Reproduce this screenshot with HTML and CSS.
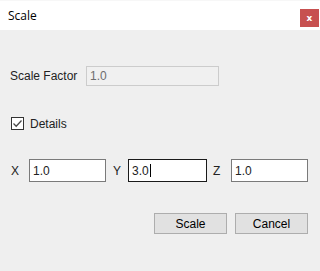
FILE: index.html
```html
<!DOCTYPE html>
<html>
<head>
<meta charset="utf-8">
<link rel="stylesheet" href="styles.css">
</head>
<body>
<div class="dialog">
  <div class="titlebar">
    <span class="title">Scale</span>
    <span class="close">x</span>
  </div>
  <div class="content">
    <div class="row factor-row">
      <span class="label factor-label">Scale Factor</span>
      <div class="field disabled">1.0</div>
    </div>
    <div class="row check-row">
      <span class="checkbox">
        <svg width="11" height="11" viewBox="0 0 11 11"><path d="M1.5 5.5 L4.2 8.2 L9.5 2.5" fill="none" stroke="#4a4a4a" stroke-width="1.3"/></svg>
      </span>
      <span class="label">Details</span>
    </div>
    <div class="row xyz-row">
      <span class="label axis">X</span>
      <div class="field small">1.0</div>
      <span class="label axis ay">Y</span>
      <div class="field small focused">3.0<span class="caret"></span></div>
      <span class="label axis az">Z</span>
      <div class="field small">1.0</div>
    </div>
    <div class="row button-row">
      <div class="btn">Scale</div>
      <div class="btn">Cancel</div>
    </div>
  </div>
</div>
</body>
</html>
```
FILE: styles.css
```css
html, body {
  margin: 0;
  padding: 0;
  background: #efefef;
  width: 320px;
  height: 271px;
  overflow: hidden;
}
.dialog {
  font-family: "Liberation Sans", Arial, sans-serif;
  font-size: 12px;
  color: #222;
}
.titlebar {
  height: 29px;
  background: #ffffff;
  border-top: 1px solid #f7f7f7;
  display: flex;
  align-items: flex-start;
}
.title {
  font-family: "Open Sans", "Noto Sans", sans-serif;
  font-size: 12px;
  color: #000;
  margin-left: 8px;
  margin-top: 6px;
}
.close {
  margin-left: auto;
  margin-top: 8px;
  margin-right: 1px;
  width: 19px;
  height: 18px;
  background: #c75050;
  color: #fff;
  font-family: "DejaVu Sans", sans-serif;
  font-weight: bold;
  font-size: 9px;
  display: flex;
  align-items: center;
  justify-content: center;
  line-height: 1;
}
.content {
  display: flex;
  flex-direction: column;
}
.row {
  display: flex;
  align-items: center;
}
.label {
  line-height: 14px;
}
.factor-row {
  margin-top: 36px;
  padding-left: 10px;
}
.factor-label {
  width: 76px;
}
.field {
  box-sizing: border-box;
  border: 1px solid #7a7a7a;
  background: #fff;
  height: 20px;
  line-height: 18px;
  padding-left: 3px;
  display: flex;
  align-items: center;
}
.field.disabled {
  width: 133px;
  background: #f0f0f0;
  border-color: #cccccc;
  color: #6d6d6d;
}
.check-row {
  margin-top: 31px;
  padding-left: 11px;
  height: 13px;
}
.checkbox {
  box-sizing: border-box;
  width: 13px;
  height: 13px;
  border: 1px solid #333;
  background: #fff;
  display: flex;
  align-items: center;
  justify-content: center;
  margin-right: 6px;
}
.xyz-row {
  margin-top: 29px;
  padding-left: 11px;
}
.axis {
  width: 18px;
}
.ay {
  margin-left: 7px;
  width: 15px;
}
.az {
  margin-left: 6px;
  width: 18px;
}
.field.small {
  width: 77px;
  height: 23px;
}
.field.focused {
  width: 79px;
  border-color: #1a1a1a;
}
.caret {
  display: inline-block;
  width: 1px;
  height: 13px;
  background: #000;
  margin-left: 1px;
}
.button-row {
  margin-top: 31px;
  padding-left: 154px;
  gap: 8px;
}
.btn {
  box-sizing: border-box;
  width: 73px;
  height: 21px;
  border: 1px solid #adadad;
  background: #e1e1e1;
  display: flex;
  align-items: center;
  justify-content: center;
  color: #000;
}
```
